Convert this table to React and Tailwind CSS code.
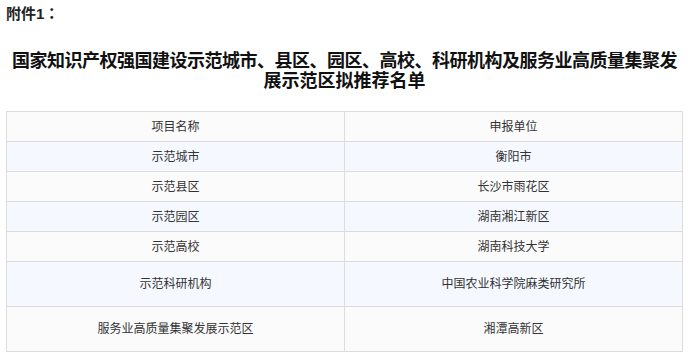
import React from 'react';

const rows = [
  { name: '示范城市', unit: '衡阳市', tall: false, blue: true },
  { name: '示范县区', unit: '长沙市雨花区', tall: false, blue: false },
  { name: '示范园区', unit: '湖南湘江新区', tall: false, blue: true },
  { name: '示范高校', unit: '湖南科技大学', tall: false, blue: false },
  { name: '示范科研机构', unit: '中国农业科学院麻类研究所', tall: true, blue: true },
  { name: '服务业高质量集聚发展示范区', unit: '湘潭高新区', tall: true, blue: false },
];

const App = () => {
  return (
    <div
      className="w-[693px] h-[364px] bg-white text-[#333] overflow-hidden"
      style={{ fontFamily: '"Liberation Sans", "Noto Sans CJK SC", sans-serif' }}
    >
      <div className="ml-[6px] w-[677px]">
        {/* Attachment label */}
        <p className="pt-[2px] text-[15px] leading-[21px] font-bold text-[#222]">
          附件1<span style={{ fontFamily: '"Noto Sans CJK JP", sans-serif' }}>：</span>
        </p>

        {/* Title */}
        <h1 className="mt-[27px] -mx-[4px] text-center text-[18px] leading-[20px] font-bold text-[#111] whitespace-nowrap">
          <span className="tracking-[-0.5px]">国家知识产权强国建设示范城市、县区、园区、高校、科研机构及服务业高质量集聚发</span>
          <br />
          展示范区拟推荐名单
        </h1>

        {/* List table */}
        <table className="mt-[20px] w-full table-fixed border-collapse text-[12px] text-[#333]">
          <tbody>
            <tr className="bg-[#fbfbfb]">
              <td className="h-[30px] border border-[#dcdcdc] text-center align-middle">项目名称</td>
              <td className="h-[30px] border border-[#dcdcdc] text-center align-middle">申报单位</td>
            </tr>
            {rows.map(row => (
              <tr key={row.name} className={row.blue ? 'bg-[#f5f9ff]' : 'bg-[#fbfbfb]'}>
                <td className={`${row.tall ? 'h-[45px]' : 'h-[30px]'} border border-[#dcdcdc] text-center align-middle`}>
                  {row.name}
                </td>
                <td className={`${row.tall ? 'h-[45px]' : 'h-[30px]'} border border-[#dcdcdc] text-center align-middle`}>
                  {row.unit}
                </td>
              </tr>
            ))}
          </tbody>
        </table>
      </div>
    </div>
  );
};

export default App;
